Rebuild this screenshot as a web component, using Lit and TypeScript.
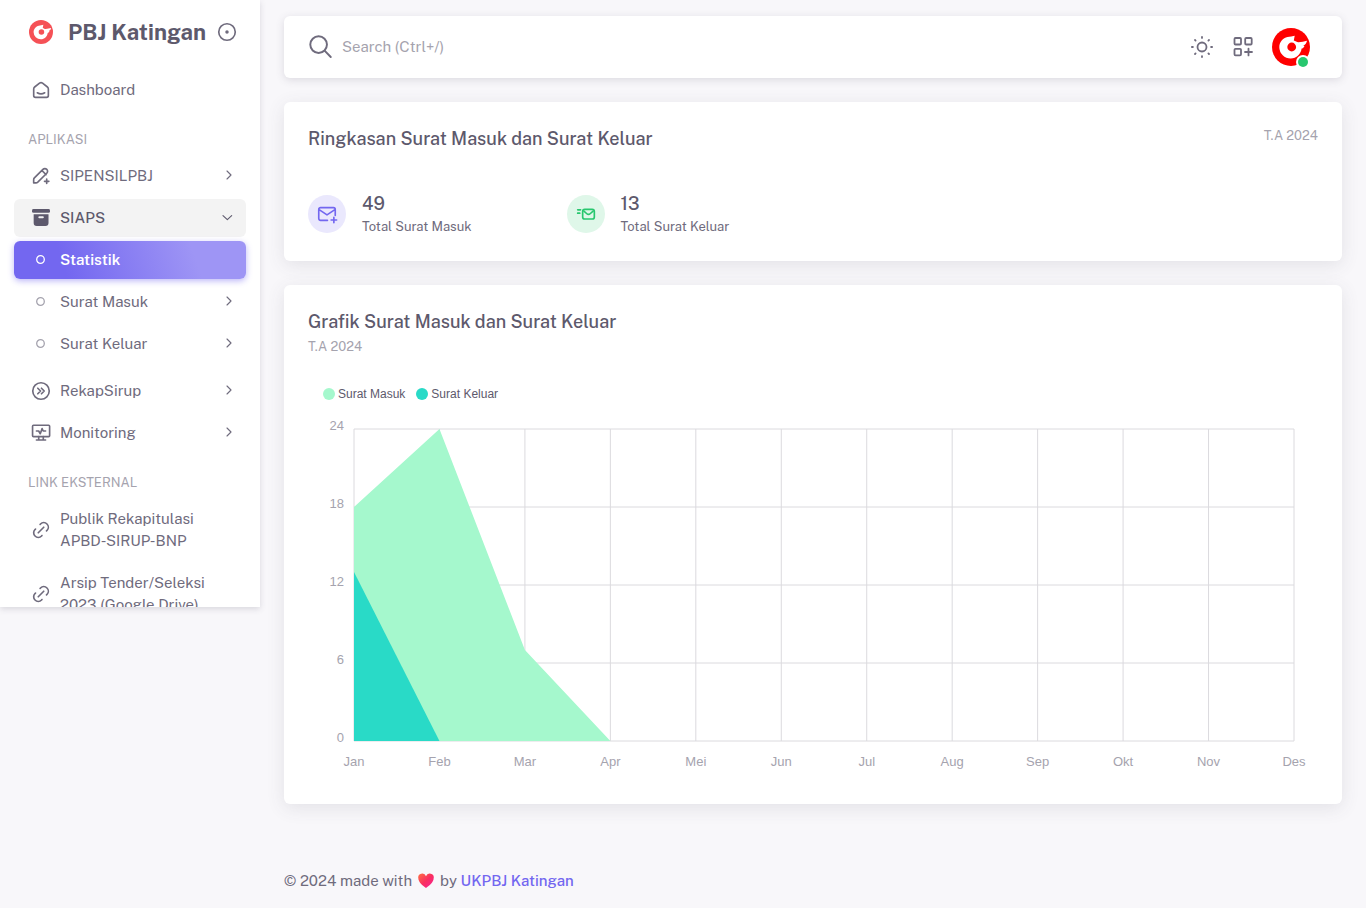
import { LitElement, html, svg, css } from "lit";
import { customElement, property } from "lit/decorators.js";

const icons: Record<string, any> = {
  home: svg`<path d="M19 8.71l-5.333-4.148a2.666 2.666 0 0 0-3.274 0l-5.334 4.148a2.665 2.665 0 0 0-1.029 2.105v7.2a2 2 0 0 0 2 2h12a2 2 0 0 0 2-2v-7.2c0-.823-.38-1.6-1.03-2.105M16 15c-2.21 1.333-5.792 1.333-8 0"/>`,
  pencil: svg`<path d="M4 19.500h2.500a3 3 0 0 0 2-.8l9.800-9.700a2.900 2.900 0 0 0-4.200-4.200l-9.300 9.300a3 3 0 0 0-.8 2zM13 6l4.500 4.500M15.800 17.800h4.800M18.200 15.400v4.800"/>`,
  archive: svg`<rect x="2.200" y="2.200" width="19.600" height="4.200" rx="1.600" fill="currentColor" stroke="none"/><path fill="currentColor" stroke="none" fill-rule="evenodd" d="M4 7.800h16.200v9.700a3.300 3.300 0 0 1-3.300 3.300h-9.600a3.300 3.300 0 0 1-3.300-3.300zM10.200 10.200a1 1 0 0 0 0 2.200h3.800a1 1 0 0 0 0-2.200z"/>`,
  chevrons: svg`<circle cx="12" cy="12" r="9"/><path d="M8.500 9l3 3-3 3M12.500 9l3 3-3 3"/>`,
  monitor: svg`<rect x="2.800" y="3.500" width="18.600" height="12.500" rx="1"/><path d="M7 19.600h10M9.500 16v3.600M14.500 16v3.600M7 9.800h2.500l1.700 3 2-5.600 1.200 2.600h2.600"/>`,
  link: svg`<path d="M9 15l6-6M11 6l.463-.536a5 5 0 0 1 7.071 7.072l-.534.464M13 18l-.397.534a5.068 5.068 0 0 1-7.127 0a4.972 4.972 0 0 1 0-7.071l.524-.463"/>`,
  right: svg`<path d="M10.500 4.500l6 6-6 6"/>`,
  down: svg`<path d="M4.500 8.500l6.500 6 6.500-6"/>`,
  ring: svg`<circle cx="11" cy="11" r="7.600"/>`,
  target: svg`<circle cx="12" cy="12" r="9"/><circle cx="12" cy="12" r="1" fill="currentColor"/>`,
  search: svg`<circle cx="9.800" cy="9.800" r="7.700"/><path d="M21 21.200l-5.700-5.800"/>`,
  sun: svg`<circle cx="12" cy="12" r="4.500"/><path d="M1.900 12h1M12 1.900v1M21.100 12h1M12 21.100v1M5 5l.6.600M19 5l-.6.600M18.400 18.400l.6.600M5.600 18.400l-.6.600"/>`,
  grid: svg`<rect x="3.500" y="3" width="6.500" height="6.500" rx="1"/><rect x="14.200" y="3" width="6.500" height="6.500" rx="1"/><rect x="3.500" y="13.800" width="6.500" height="6.500" rx="1"/><path d="M14 17h7M17.500 13.600v6.800"/>`,
  mailPlus: svg`<path d="M12.500 19h-7.500a2 2 0 0 1-2-2v-10a2 2 0 0 1 2-2h14a2 2 0 0 1 2 2v6.500M16.500 18.500h6M19.500 15.500v6M3 7l9 6 9-6"/>`,
  mailFast: svg`<rect x="8" y="6.500" width="14" height="11.500" rx="2.500"/><path d="M2 7h3.500M2 11h2.500M9.500 8.500l3.200 2.900a3.300 3.300 0 0 0 4.600 0l3.200-2.900"/>`,
  heart: svg`<defs><linearGradient id="h" x1="0" y1="0" x2="1" y2="1"><stop offset="0" stop-color="#ff7043"/><stop offset=".5" stop-color="#f92f60"/><stop offset="1" stop-color="#f7209a"/></linearGradient></defs><path fill="url(#h)" stroke="none" d="M12 22.500C7 19 .5 14 .5 8a6 6 0 0 1 11.500-3.300A6 6 0 0 1 23.500 8c0 6-6.500 11-11.500 14.500z"/>`,
};

const icon = (name: string, size: number, stroke = 1.8) => html`<svg
  class="icon"
  aria-hidden="true"
  width=${size}
  height=${size}
  viewBox="0 0 24 24"
  fill="none"
  stroke="currentColor"
  stroke-width=${stroke}
  stroke-linecap="round"
  stroke-linejoin="round"
>${icons[name]}</svg>`;

const logo = (size: number, color: string) => html`<svg class="icon" aria-hidden="true" width=${size} height=${size} viewBox="0 0 38 38">
  <circle cx="19" cy="19" r="19" fill=${color}/>
  <path fill="#fff" d="M22.700 7.700L21.800 12.500C23.500 13.200 25 14.300 26.500 14.200C29.500 14.100 32 13.500 35 12.800C34.500 15.500 33 17 31.200 17.500L32.500 18C31.500 20 30.500 20.500 29.600 20.500C29 26 24.500 30.400 18.700 30.400A11.300 11.300 0 0 1 7.300 19.300C7.300 14 11 10 15.500 9C18 8.400 20.500 8.300 22.700 7.700z"/>
  <circle cx="19.700" cy="19" r="4.400" fill=${color}/>
</svg>`;

const font = css`"Public Sans", Inter, "Liberation Sans", sans-serif`;

@customElement("area-chart")
class AreaChart extends LitElement {
  @property({ attribute: false }) months: string[] = [];
  @property({ attribute: false }) series: { name: string; color: string; values: number[] }[] = [];
  @property({ type: Number }) max = 24;

  static styles = css`
    :host { display: block; padding: 30px 0 0; font-family: "Liberation Sans", Arial, sans-serif; }
    .legend { display: flex; gap: 11px; padding: 0 0 0 15px; margin: 0 0 28px; list-style: none; font-size: 12px; line-height: 14px; color: #5d596c; }
    .item { display: flex; align-items: center; gap: 3px; }
    .dot { width: 12px; height: 12px; border-radius: 50%; }
    .plot { padding: 0 24px 39px 46px; }
    .canvas { display: block; width: 100%; height: 312px; overflow: visible; }
    .label { font-size: 13px; fill: #a5a3ae; }
    .line { stroke: #dbdade; stroke-width: 1; }
  `;

  render() {
    const last = this.months.length - 1;
    const ticks = [24, 18, 12, 6, 0];
    return html`
      <ul class="legend">
        ${this.series.map((s) => html`<li class="item"><span class="dot" style="background:${s.color}"></span>${s.name}</li>`)}
      </ul>
      <div class="plot">
        <svg class="canvas" role="img" aria-label="Grafik Surat Masuk dan Surat Keluar">
          ${ticks.map((t, i) => svg`
            <line class="line" x1="0" x2="100%" y1="${i * 25}%" y2="${i * 25}%"/>
            <text class="label" x="-10" y="${i * 78 + 1}" text-anchor="end">${t}</text>`)}
          ${this.months.map((m, i) => svg`
            <line class="line" y1="0" y2="100%" x1="${(i * 100) / last}%" x2="${(i * 100) / last}%"/>
            <text class="label" x="${(i * 100) / last}%" y="337" text-anchor="middle">${m}</text>`)}
          <svg width="100%" height="100%" viewBox="0 0 ${last} ${this.max}" preserveAspectRatio="none">
            ${this.series.map((s) => svg`<polygon fill=${s.color} points="0,${this.max} ${s.values.map((v, i) => `${i},${this.max - v}`).join(" ")}"/>`)}
          </svg>
        </svg>
      </div>`;
  }
}

@customElement("app-root")
class AppRoot extends LitElement {
  static styles = css`
    :host { display: block; min-height: 100vh; background: #f8f7fa; color: #6f6b7d; font: 400 15px/22px ${font}; }
    * { box-sizing: border-box; }
    a { color: inherit; text-decoration: none; }
    button { border: 0; padding: 0; background: none; color: inherit; font: inherit; display: flex; cursor: pointer; }
    .icon { display: block; flex: none; }
    .layout { display: flex; align-items: flex-start; }
    .sidebar { width: 260px; flex: none; max-height: 607px; overflow: hidden; background: #fff; box-shadow: 0 2px 6px rgba(75, 70, 92, 0.18); }
    .brand { display: flex; align-items: center; height: 64px; padding: 0 22px 0 29px; }
    .brand-link { display: flex; align-items: center; gap: 15px; flex: 1; }
    .brand-name { font-size: 22px; font-weight: 700; color: #5d596c; white-space: nowrap; }
    .menu { list-style: none; margin: 0; padding: 7px 14px 0; display: flex; flex-direction: column; gap: 4px; }
    .submenu { list-style: none; margin: 4px 0 5px; padding: 0; display: flex; flex-direction: column; gap: 4px; }
    .heading { padding: 17px 14px 3px; font-size: 13px; line-height: 20px; color: #a5a3ae; }
    .entry { display: flex; align-items: center; gap: 8px; padding: 8px 10px 8px 16px; border-radius: 6px; }
    .entry .text { flex: 1; }
    .entry.open { background: #f3f3f3; color: #5d596c; font-weight: 500; }
    .entry.active { background: linear-gradient(72deg, #7367f0 22%, #9e95f5 77%); box-shadow: 0 2px 6px rgba(115, 103, 240, 0.48); color: #fff; font-weight: 600; }
    .mark { width: 22px; display: flex; justify-content: center; flex: none; }
    .faint { color: #a5a3ae; }
    .active .faint { color: #fff; }
    .main { flex: 1; min-width: 0; padding: 16px 24px; display: flex; flex-direction: column; gap: 24px; }
    .topbar, .card { background: #fff; border-radius: 6px; }
    .topbar { display: flex; align-items: center; height: 62px; padding: 0 32px 0 24px; box-shadow: 0 2px 8px rgba(75, 70, 92, 0.16); }
    .search { display: flex; align-items: center; gap: 8px; flex: 1; }
    .search-input { flex: 1; min-width: 0; border: 0; outline: 0; background: none; font: inherit; color: inherit; padding: 0; }
    .search-input::placeholder { color: #a5a3ae; opacity: 1; }
    .actions { display: flex; align-items: center; gap: 17px; }
    .avatar { position: relative; }
    .status { position: absolute; right: 2px; bottom: -1px; width: 10px; height: 10px; border-radius: 50%; background: #28c76f; box-shadow: 0 0 0 2px #fff; }
    .card { padding: 24px; box-shadow: 0 4px 18px rgba(75, 70, 92, 0.12); }
    .card-head { display: flex; justify-content: space-between; }
    .card-stack { display: flex; flex-direction: column; gap: 2px; }
    .title { margin: 0; font-size: 18px; line-height: 26px; font-weight: 500; color: #5d596c; }
    .note { font-size: 13px; line-height: 20px; color: #a5a3ae; }
    .stats { display: grid; grid-template-columns: repeat(4, minmax(0, 1fr)); gap: 24px; padding: 39px 0 0; }
    .stat { display: flex; align-items: center; gap: 16px; white-space: nowrap; }
    .badge { display: flex; align-items: center; justify-content: center; width: 38px; height: 38px; border-radius: 50%; }
    .violet { background: #eae8fd; color: #7367f0; }
    .green { background: #dff7e9; color: #28c76f; }
    .figure { font-size: 18px; line-height: 26px; font-weight: 500; color: #5d596c; }
    .caption { font-size: 13px; line-height: 20px; }
    .footer { display: flex; align-items: center; gap: 6px; padding: 42px 0 0; }
    .footer-link { color: #7367f0; font-weight: 500; }
  `;

  private entry(name: string, text: any, opts: { arrow?: string; state?: string } = {}) {
    const small = name === "ring";
    return html`<a class="entry ${opts.state ?? ""}" href="#">
      <span class="mark ${small ? "faint" : ""}">${icon(name, small ? 12 : 22, small ? 2.6 : 1.8)}</span>
      <span class="text">${text}</span>
      ${opts.arrow ? icon(opts.arrow, 16, 1.7) : ""}
    </a>`;
  }

  render() {
    const months = ["Jan", "Feb", "Mar", "Apr", "Mei", "Jun", "Jul", "Aug", "Sep", "Okt", "Nov", "Des"];
    const series = [
      { name: "Surat Masuk", color: "#a5f8cd", values: [18, 24, 7, 0] },
      { name: "Surat Keluar", color: "#29dac7", values: [13, 0] },
    ];
    return html`
      <div class="layout">
        <aside class="sidebar">
          <div class="brand">
            <a class="brand-link" href="#">${logo(24, "#f55156")}<span class="brand-name">PBJ Katingan</span></a>
            <button aria-label="Menu">${icon("target", 22)}</button>
          </div>
          <nav>
            <ul class="menu">
              <li>${this.entry("home", "Dashboard")}</li>
              <li class="heading">APLIKASI</li>
              <li>${this.entry("pencil", "SIPENSILPBJ", { arrow: "right" })}</li>
              <li>
                ${this.entry("archive", "SIAPS", { arrow: "down", state: "open" })}
                <ul class="submenu">
                  <li>${this.entry("ring", "Statistik", { state: "active" })}</li>
                  <li>${this.entry("ring", "Surat Masuk", { arrow: "right" })}</li>
                  <li>${this.entry("ring", "Surat Keluar", { arrow: "right" })}</li>
                </ul>
              </li>
              <li>${this.entry("chevrons", "RekapSirup", { arrow: "right" })}</li>
              <li>${this.entry("monitor", "Monitoring", { arrow: "right" })}</li>
              <li class="heading">LINK EKSTERNAL</li>
              <li>${this.entry("link", html`Publik Rekapitulasi<br />APBD-SIRUP-BNP`)}</li>
              <li>${this.entry("link", html`Arsip Tender/Seleksi<br />2023 (Google Drive)`)}</li>
            </ul>
          </nav>
        </aside>
        <main class="main">
          <header class="topbar">
            <label class="search">${icon("search", 26)}<input class="search-input" type="text" aria-label="Search" placeholder="Search (Ctrl+/)" /></label>
            <div class="actions">
              <button aria-label="Theme">${icon("sun", 24)}</button>
              <button aria-label="Shortcuts">${icon("grid", 24)}</button>
              <button class="avatar" aria-label="Profile">${logo(38, "#ff0000")}<span class="status"></span></button>
            </div>
          </header>
          <section class="card">
            <div class="card-head"><h5 class="title">Ringkasan Surat Masuk dan Surat Keluar</h5><span class="note">T.A 2024</span></div>
            <div class="stats">
              <div class="stat"><span class="badge violet">${icon("mailPlus", 22)}</span><div><div class="figure">49</div><div class="caption">Total Surat Masuk</div></div></div>
              <div class="stat"><span class="badge green">${icon("mailFast", 20, 2)}</span><div><div class="figure">13</div><div class="caption">Total Surat Keluar</div></div></div>
            </div>
          </section>
          <section class="card">
            <div class="card-stack"><h5 class="title">Grafik Surat Masuk dan Surat Keluar</h5><span class="note">T.A 2024</span></div>
            <area-chart .months=${months} .series=${series}></area-chart>
          </section>
          <footer class="footer"><span>© 2024 made with</span>${icon("heart", 16)}<span>by <a class="footer-link" href="#">UKPBJ Katingan</a></span></footer>
        </main>
      </div>`;
  }
}
